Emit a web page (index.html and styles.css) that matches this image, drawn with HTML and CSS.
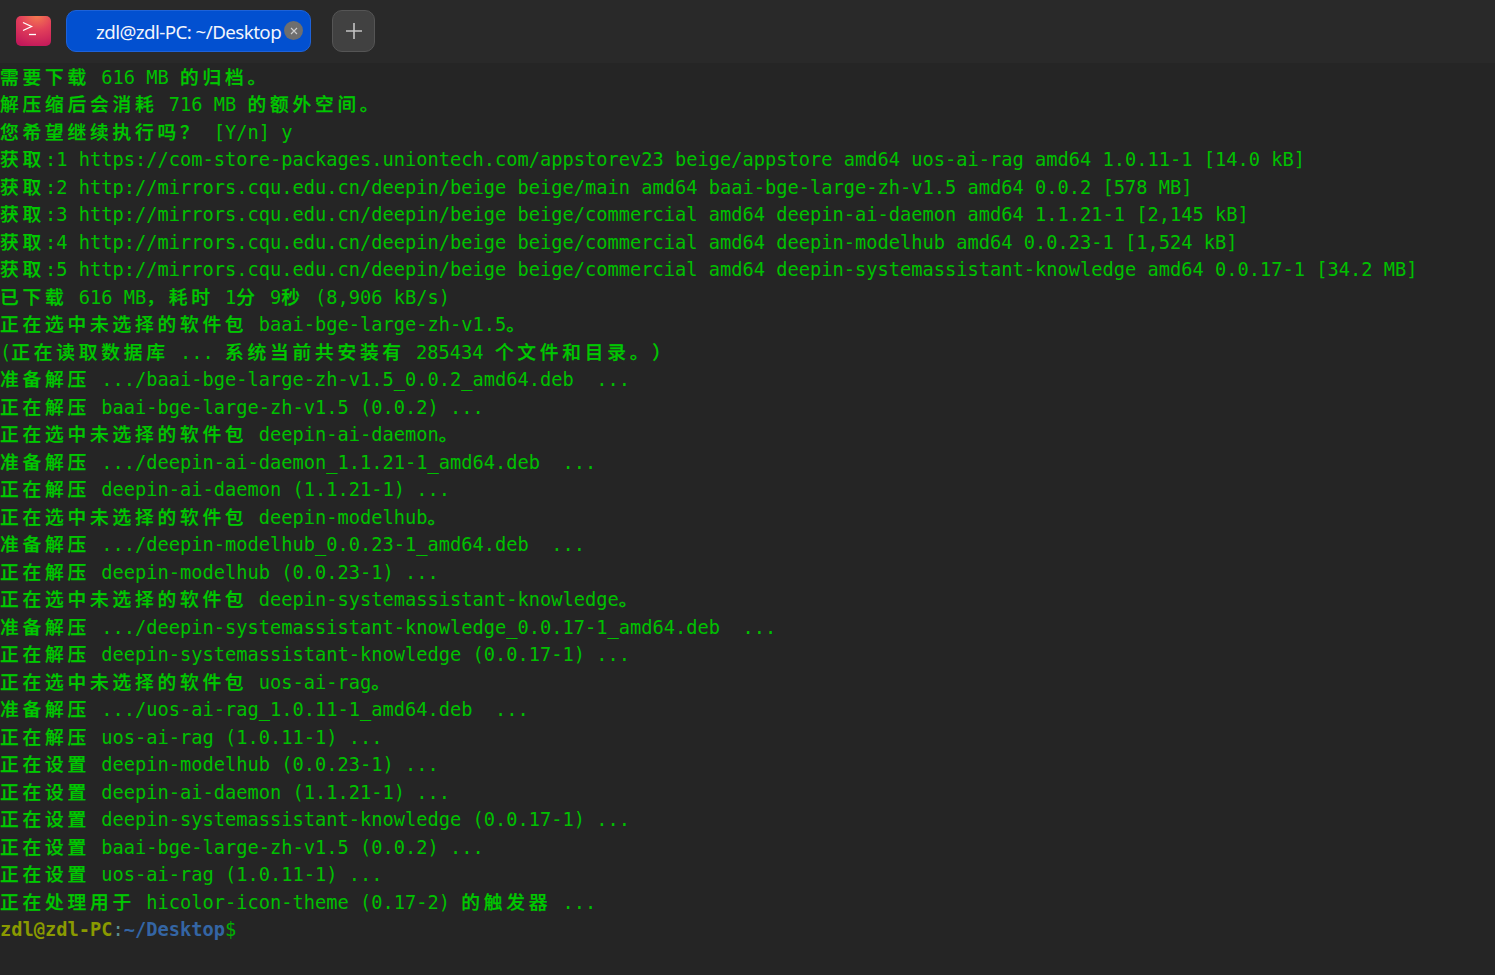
FILE: index.html
```html
<!DOCTYPE html>
<html lang="zh-CN">
<head>
<meta charset="utf-8">
<title>Terminal</title>
<link rel="stylesheet" href="styles.css">
</head>
<body>
<header class="titlebar">
  <svg class="app-icon" width="36" height="30" viewBox="0 0 36 30">
    <defs>
      <radialGradient id="appg" cx="0.6" cy="0" r="1.05">
        <stop offset="0" stop-color="#f47a50"/>
        <stop offset="0.45" stop-color="#e2405a"/>
        <stop offset="1" stop-color="#c2185a"/>
      </radialGradient>
    </defs>
    <rect width="35" height="30" rx="5" fill="url(#appg)"/>
    <path d="M7 6.5 L15.5 10.5 L7 14.5" fill="none" stroke="#fff" stroke-width="1.3"/>
    <path d="M13 18.5 H20" fill="none" stroke="#fff" stroke-width="1.3"/>
  </svg>
  <div class="tab">
    <span class="tab-title">zdl@zdl-PC: ~/Desktop</span>
    <span class="tab-close">
      <svg width="8" height="8" viewBox="0 0 8 8"><path d="M1 1 L7 7 M7 1 L1 7" stroke="#d0d0d0" stroke-width="1.1"/></svg>
    </span>
  </div>
  <button class="add-tab">
    <svg width="16" height="16" viewBox="0 0 16 16"><path d="M8 0 V16 M0 8 H16" stroke="#c4c4c4" stroke-width="1.6"/></svg>
  </button>
</header>
<main class="term">
<div class="ln"><i>需要下载</i> 616 MB <i>的归档。</i></div>
<div class="ln"><i>解压缩后会消耗</i> 716 MB <i>的额外空间。</i></div>
<div class="ln"><i>您希望继续执行吗？</i> [Y/n] y</div>
<div class="ln"><i>获取</i>:1 https://com-store-packages.uniontech.com/appstorev23 beige/appstore amd64 uos-ai-rag amd64 1.0.11-1 [14.0 kB]</div>
<div class="ln"><i>获取</i>:2 http://mirrors.cqu.edu.cn/deepin/beige beige/main amd64 baai-bge-large-zh-v1.5 amd64 0.0.2 [578 MB]</div>
<div class="ln"><i>获取</i>:3 http://mirrors.cqu.edu.cn/deepin/beige beige/commercial amd64 deepin-ai-daemon amd64 1.1.21-1 [2,145 kB]</div>
<div class="ln"><i>获取</i>:4 http://mirrors.cqu.edu.cn/deepin/beige beige/commercial amd64 deepin-modelhub amd64 0.0.23-1 [1,524 kB]</div>
<div class="ln"><i>获取</i>:5 http://mirrors.cqu.edu.cn/deepin/beige beige/commercial amd64 deepin-systemassistant-knowledge amd64 0.0.17-1 [34.2 MB]</div>
<div class="ln"><i>已下载</i> 616 MB<i>，耗时</i> 1<i>分</i> 9<i>秒</i> (8,906 kB/s)</div>
<div class="ln"><i>正在选中未选择的软件包</i> baai-bge-large-zh-v1.5<i>。</i></div>
<div class="ln">(<i>正在读取数据库</i> ... <i>系统当前共安装有</i> 285434 <i>个文件和目录。）</i></div>
<div class="ln"><i>准备解压</i> .../baai-bge-large-zh-v1.5_0.0.2_amd64.deb  ...</div>
<div class="ln"><i>正在解压</i> baai-bge-large-zh-v1.5 (0.0.2) ...</div>
<div class="ln"><i>正在选中未选择的软件包</i> deepin-ai-daemon<i>。</i></div>
<div class="ln"><i>准备解压</i> .../deepin-ai-daemon_1.1.21-1_amd64.deb  ...</div>
<div class="ln"><i>正在解压</i> deepin-ai-daemon (1.1.21-1) ...</div>
<div class="ln"><i>正在选中未选择的软件包</i> deepin-modelhub<i>。</i></div>
<div class="ln"><i>准备解压</i> .../deepin-modelhub_0.0.23-1_amd64.deb  ...</div>
<div class="ln"><i>正在解压</i> deepin-modelhub (0.0.23-1) ...</div>
<div class="ln"><i>正在选中未选择的软件包</i> deepin-systemassistant-knowledge<i>。</i></div>
<div class="ln"><i>准备解压</i> .../deepin-systemassistant-knowledge_0.0.17-1_amd64.deb  ...</div>
<div class="ln"><i>正在解压</i> deepin-systemassistant-knowledge (0.0.17-1) ...</div>
<div class="ln"><i>正在选中未选择的软件包</i> uos-ai-rag<i>。</i></div>
<div class="ln"><i>准备解压</i> .../uos-ai-rag_1.0.11-1_amd64.deb  ...</div>
<div class="ln"><i>正在解压</i> uos-ai-rag (1.0.11-1) ...</div>
<div class="ln"><i>正在设置</i> deepin-modelhub (0.0.23-1) ...</div>
<div class="ln"><i>正在设置</i> deepin-ai-daemon (1.1.21-1) ...</div>
<div class="ln"><i>正在设置</i> deepin-systemassistant-knowledge (0.0.17-1) ...</div>
<div class="ln"><i>正在设置</i> baai-bge-large-zh-v1.5 (0.0.2) ...</div>
<div class="ln"><i>正在设置</i> uos-ai-rag (1.0.11-1) ...</div>
<div class="ln"><i>正在处理用于</i> hicolor-icon-theme (0.17-2) <i>的触发器</i> ...</div>
<div class="ln prompt"><span class="host">zdl@zdl-PC</span><span class="colon">:</span><span class="path">~/Desktop</span><span class="dollar">$</span></div>
</main>
</body>
</html>
```
FILE: styles.css
```css
* { box-sizing: border-box; }
html, body { margin: 0; height: 100%; }
body {
  background: #252525;
  overflow: hidden;
}
.titlebar {
  height: 63px;
  padding: 0 0 1px 16px;
  background: #292929;
  display: flex;
  align-items: center;
}
.app-icon { flex: none; margin-right: 14px; }
.tab {
  width: 245px;
  height: 42px;
  background: #0250d0;
  border: 1px solid #1e62d8;
  border-radius: 10px;
  display: flex;
  align-items: center;
  padding: 2px 0 0 29px;
  position: relative;
}
.tab-title {
  font: 18.8px "Noto Sans", sans-serif;
  letter-spacing: -0.58px;
  color: #f2f5fc;
  white-space: nowrap;
}
.tab-close {
  position: absolute;
  right: 7px;
  top: 10px;
  width: 19px;
  height: 19px;
  border-radius: 50%;
  background: #6e6e6e;
  display: flex;
  align-items: center;
  justify-content: center;
}
.add-tab {
  margin-left: 21px;
  width: 43px;
  height: 42px;
  padding: 0;
  background: #414141;
  border: 1px solid #555;
  border-radius: 10px;
  display: flex;
  align-items: center;
  justify-content: center;
}
.term {
  padding-top: 0.75px;
  font: 18.7px/27.5px "DejaVu Sans Mono", monospace;
  color: #00c000;
}
.ln { height: 27.5px; white-space: pre; }
.ln i {
  font-style: normal;
  font-family: "Noto Sans CJK SC", sans-serif;
  font-weight: 500;
  font-size: 18.7px;
  line-height: 0;
  letter-spacing: 3.8px;
  text-spacing-trim: space-all;
  -webkit-text-stroke: 0.25px #00c800;
  color: #00c800;
}
.prompt { font-weight: bold; }
.host { color: #8a9a00; }
.colon { color: #5f8f8f; font-weight: normal; }
.path { color: #3465a4; }
.dollar { color: #00b000; font-weight: normal; }
```
